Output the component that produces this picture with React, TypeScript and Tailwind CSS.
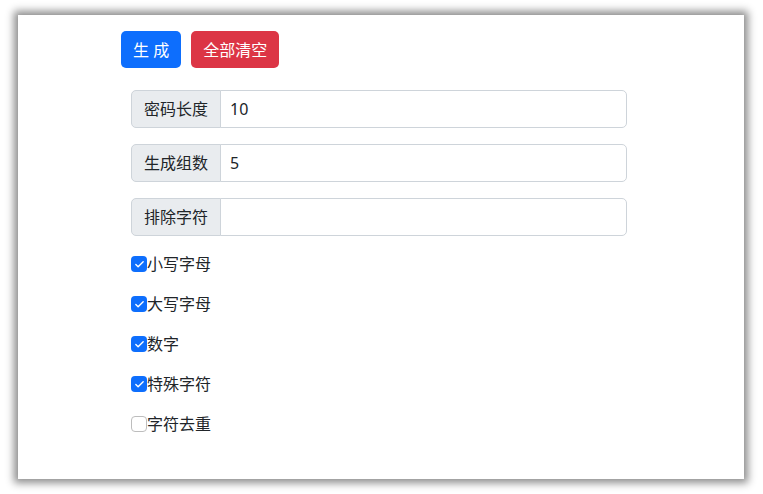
import { Check } from 'lucide-react';

const font = { fontFamily: '"Segoe UI", "Noto Sans", "Noto Sans CJK SC", sans-serif' };

function InputRow({ label, value }: { label: string; value: string }) {
  return (
    <div className="flex h-[38px] w-[496px] text-[16px] text-[#212529]">
      <span className="flex w-[90px] items-center justify-center rounded-l-[5px] border border-[#ced4da] bg-[#e9ecef]">
        {label}
      </span>
      <div className="-ml-px flex flex-1 items-center rounded-r-[5px] border border-[#ced4da] bg-white px-[9px]">
        {value}
      </div>
    </div>
  );
}

function CheckRow({ label, checked }: { label: string; checked: boolean }) {
  return (
    <label className="flex h-6 items-center text-[16px] text-[#212529]">
      {checked ? (
        <span className="flex h-4 w-4 items-center justify-center rounded-[4px] bg-[#0d6efd]">
          <Check size={11} strokeWidth={3} className="text-white" />
        </span>
      ) : (
        <span className="h-4 w-4 rounded-[4px] border border-[#bdbdbd] bg-white" />
      )}
      <span>{label}</span>
    </label>
  );
}

export default function App() {
  return (
    <div className="h-[494px] w-[763px] bg-white pl-[18px] pt-[15px]" style={font}>
      <div className="h-[464px] w-[726px] bg-white shadow-[0_0_8px_4px_rgba(0,0,0,0.45)]">
        <div className="flex gap-[10px] pl-[103px] pt-[16px]">
          <button className="h-[37px] rounded-[5px] bg-[#0d6efd] px-3 text-[16px] text-white">生 成</button>
          <button className="h-[37px] rounded-[5px] bg-[#dc3545] px-3 text-[16px] text-white">全部清空</button>
        </div>
        <div className="flex flex-col gap-4 pl-[113px] pt-[22px]">
          <InputRow label="密码长度" value="10" />
          <InputRow label="生成组数" value="5" />
          <InputRow label="排除字符" value="" />
        </div>
        <div className="flex flex-col gap-4 pl-[113px] pt-[16px]">
          <CheckRow label="小写字母" checked />
          <CheckRow label="大写字母" checked />
          <CheckRow label="数字" checked />
          <CheckRow label="特殊字符" checked />
          <CheckRow label="字符去重" checked={false} />
        </div>
      </div>
    </div>
  );
}
